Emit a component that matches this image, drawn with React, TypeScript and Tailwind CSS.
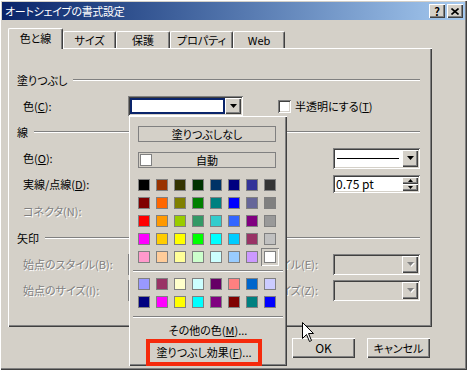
import React from "react";

const raised =
  "shadow-[inset_1px_1px_0_#ffffff,inset_-1px_-1px_0_#404040,inset_-2px_-2px_0_#808080]";
const sunken =
  "shadow-[inset_1px_1px_0_#808080,inset_-1px_-1px_0_#ffffff,inset_2px_2px_0_#404040,inset_-2px_-2px_0_#d4d0c8]";
const grey = "text-[#808080] [text-shadow:1px_1px_0_#ffffff]";

const standard = [
  ["#000000", "#993300", "#333300", "#003300", "#003366", "#000080", "#333399", "#333333"],
  ["#800000", "#ff6600", "#808000", "#008000", "#008080", "#0000ff", "#666699", "#808080"],
  ["#ff0000", "#ff9900", "#99cc00", "#339966", "#33cccc", "#3366ff", "#800080", "#999999"],
  ["#ff00ff", "#ffcc00", "#ffff00", "#00ff00", "#00ffff", "#00ccff", "#993366", "#c0c0c0"],
  ["#ff99cc", "#ffcc99", "#ffff99", "#ccffcc", "#ccffff", "#99ccff", "#cc99ff", "#ffffff"],
];
const custom = [
  ["#9999ff", "#993366", "#ffffcc", "#ccffff", "#660066", "#ff8080", "#0066cc", "#ccccff"],
  ["#000080", "#ff00ff", "#ffff00", "#00ffff", "#800080", "#800000", "#008080", "#0000ff"],
];

function Arrow({ disabled }: { disabled?: boolean }) {
  return (
    <svg width="7" height="4" viewBox="0 0 7 4" className={disabled ? "drop-shadow-[1px_1px_0_#fff]" : ""}>
      <polygon points="0,0 7,0 3.5,4" fill={disabled ? "#808080" : "#000"} />
    </svg>
  );
}

function DropBtn({ disabled }: { disabled?: boolean }) {
  return (
    <div className={`w-[16px] h-full bg-[#d4d0c8] flex items-center justify-center ${raised}`}>
      <Arrow disabled={disabled} />
    </div>
  );
}

function Header({ label }: { label: string }) {
  return (
    <div className="h-[26px] flex items-center pl-[9px] pr-[12px]">
      <span>{label}</span>
      <div className="flex-1 ml-[6px] h-[2px] border-t border-[#808080] border-b border-b-white" />
    </div>
  );
}

function Mn({ k }: { k: string }) {
  return <span className="underline underline-offset-1">{k}</span>;
}

function Swatches({ rows, selected }: { rows: string[][]; selected?: string }) {
  return (
    <div className="ml-[6px] flex flex-col">
      {rows.map((row, ri) => (
        <div key={ri} className="flex">
          {row.map((c, ci) => {
            const sel = selected === `${ri}-${ci}`;
            return (
              <div
                key={ci}
                className={`w-[18px] h-[18px] flex items-center justify-center ${
                  sel ? "shadow-[inset_1px_1px_0_#808080,inset_-1px_-1px_0_#ffffff]" : ""
                }`}
              >
                <div className="w-[12px] h-[12px] border border-[#808080]" style={{ backgroundColor: c }} />
              </div>
            );
          })}
        </div>
      ))}
    </div>
  );
}

function Separator() {
  return <div className="mx-[4px] h-[2px] border-t border-[#808080] border-b border-b-white" />;
}

export default function App() {
  return (
    <div
      className={`relative w-[467px] h-[370px] bg-[#d4d0c8] p-[2px] text-[11px] text-black leading-none [font-feature-settings:'palt'] ${raised}`}
      style={{ fontFamily: "'Noto Sans CJK JP', 'Noto Sans', sans-serif" }}
    >
      {/* title bar */}
      <div className="h-[18px] flex items-center justify-between pl-[3px] pr-[2px] bg-gradient-to-r from-[#0a246a] to-[#a6caf0]">
        <span className="text-white text-[11px] tracking-[-0.3px]">オートシェイプの書式設定</span>
        <div className="flex gap-[2px]">
          <div className={`w-[16px] h-[14px] bg-[#d4d0c8] flex items-center justify-center font-bold text-[11px] ${raised}`}>
            ?
          </div>
          <div className={`w-[16px] h-[14px] bg-[#d4d0c8] flex items-center justify-center ${raised}`}>
            <svg width="8" height="7" viewBox="0 0 8 7">
              <path d="M0.5 0.5 L7.5 6.5 M7.5 0.5 L0.5 6.5" stroke="#000" strokeWidth="1.6" />
            </svg>
          </div>
        </div>
      </div>

      {/* tabs */}
      <div className="mt-[8px] h-[20px] flex items-end pl-[6px]">
        <div className="relative z-10 w-[55px] h-[21px] -mb-[1px] bg-[#d4d0c8] border-t border-l border-white rounded-t-[2px] border-r border-r-[#404040] shadow-[inset_-1px_0_0_#808080] flex items-center justify-center pb-[2px]">
          色と線
        </div>
        {[
          ["サイズ", "w-[53px]"],
          ["保護", "w-[54px]"],
          ["プロパティ", "w-[63px]"],
          ["Web", "w-[52px]"],
        ].map(([t, w]) => (
          <div
            key={t}
            className={`${w} h-[17px] border-t border-l border-white rounded-t-[2px] border-r border-r-[#404040] shadow-[inset_-1px_0_0_#808080] flex items-center justify-center`}
          >
            {t}
          </div>
        ))}
      </div>

      {/* panel */}
      <div className={`ml-[6px] w-[424px] h-[279px] pt-[19px] ${raised}`}>
        <Header label="塗りつぶし" />
        <div className="h-[26px] flex items-center pl-[15px]">
          <span className="w-[105px]">
            色(<Mn k="C" />):
          </span>
          <div className={`w-[115px] h-[20px] flex p-[2px] bg-white ${sunken}`}>
            <div className="flex-1 border-2 border-[#0a246a] bg-white" />
            <DropBtn />
          </div>
          <div className={`ml-[35px] w-[13px] h-[13px] bg-white ${sunken}`} />
          <span className="ml-[4px]">
            半透明にする(<Mn k="T" />)
          </span>
        </div>
        <Header label="線" />
        <div className="h-[26px] flex items-center pl-[15px] pr-[12px]">
          <span>
            色(<Mn k="O" />):
          </span>
          <div className={`ml-auto w-[87px] h-[21px] flex p-[2px] bg-white ${sunken}`}>
            <div className="flex-1 flex items-center pl-[2px] pr-[3px]">
              <div className="w-full h-px bg-black" />
            </div>
            <DropBtn />
          </div>
        </div>
        <div className="h-[26px] flex items-center pl-[15px] pr-[12px]">
          <span>
            実線/点線(<Mn k="D" />):
          </span>
          <div className={`ml-auto w-[87px] h-[18px] flex p-[2px] bg-white ${sunken}`}>
            <div className="flex-1 flex items-center pl-[1px] text-[12px]">0.75 pt</div>
            <div className="w-[16px] flex flex-col">
              <div className={`flex-1 bg-[#d4d0c8] flex items-center justify-center ${raised}`}>
                <svg width="5" height="3" viewBox="0 0 5 3">
                  <polygon points="2.5,0 5,3 0,3" fill="#000" />
                </svg>
              </div>
              <div className={`flex-1 bg-[#d4d0c8] flex items-center justify-center ${raised}`}>
                <svg width="5" height="3" viewBox="0 0 5 3">
                  <polygon points="0,0 5,0 2.5,3" fill="#000" />
                </svg>
              </div>
            </div>
          </div>
        </div>
        <div className="h-[28px] flex items-center pl-[15px]">
          <span className={grey}>コネクタ(N):</span>
        </div>
        <Header label="矢印" />
        {[
          ["始点のスタイル(B):", "終点のスタイル(E):"],
          ["始点のサイズ(I):", "終点のサイズ(Z):"],
        ].map(([l, r]) => (
          <div key={l} className="h-[26px] flex items-center pl-[15px] pr-[12px]">
            <span className={`w-[105px] ${grey}`}>{l}</span>
            <div className={`w-[88px] h-[21px] flex p-[2px] ${sunken}`}>
              <div className="flex-1" />
              <DropBtn disabled />
            </div>
            <span className={`ml-auto ${grey}`}>{r}</span>
            <div className={`ml-[15px] w-[87px] h-[21px] flex p-[2px] ${sunken}`}>
              <div className="flex-1" />
              <DropBtn disabled />
            </div>
          </div>
        ))}
      </div>

      {/* buttons */}
      <div className="mt-[11px] flex justify-end gap-[12px] pr-[35px]">
        <div className={`w-[63px] h-[20px] flex items-center justify-center text-[12px] ${raised}`}>OK</div>
        <div className={`w-[63px] h-[20px] flex items-center justify-center ${raised}`}>キャンセル</div>
      </div>

      {/* color popup */}
      <div
        className={`absolute left-[129px] top-[116px] w-[158px] h-[250px] bg-[#d4d0c8] z-20 flex flex-col shadow-[inset_1px_1px_0_#ffffff,inset_-1px_-1px_0_#404040,inset_-2px_-2px_0_#808080]`}
      >
        <div className="ml-[9px] mt-[10px] w-[138px] h-[16px] border border-[#808080] flex items-center justify-center">
          塗りつぶしなし
        </div>
        <div className="relative ml-[9px] mt-[10px] w-[138px] h-[16px] border border-[#808080] flex items-center justify-center">
          <div className="absolute left-[1px] top-[1px] w-[12px] h-[12px] bg-white border border-[#808080]" />
          自動
        </div>
        <div className="mt-[8px]">
          <Swatches rows={standard} selected="4-7" />
        </div>
        <div className="mt-[4px]">
          <Separator />
        </div>
        <div className="mt-[3px]">
          <Swatches rows={custom} />
        </div>
        <div className="mt-[5px]">
          <Separator />
        </div>
        <div className="mt-[3px] h-[18px] flex items-center justify-center">
          その他の色(<Mn k="M" />)...
        </div>
        <div className="ml-[17px] w-[116px] h-[27px] border-[4px] border-[#f52a0c] flex items-center justify-center">
          塗りつぶし効果(<Mn k="F" />)...
        </div>
      </div>

      {/* mouse cursor */}
      <svg className="absolute left-[302px] top-[322px] z-30" width="13" height="21" viewBox="0 0 13 21">
        <path d="M0.5 0.5 L0.5 16.5 L4.5 12.5 L7.5 19.5 L9.5 18.5 L6.5 11.5 L11.5 11.5 Z" fill="#fff" stroke="#000" strokeWidth="1" />
      </svg>
    </div>
  );
}
